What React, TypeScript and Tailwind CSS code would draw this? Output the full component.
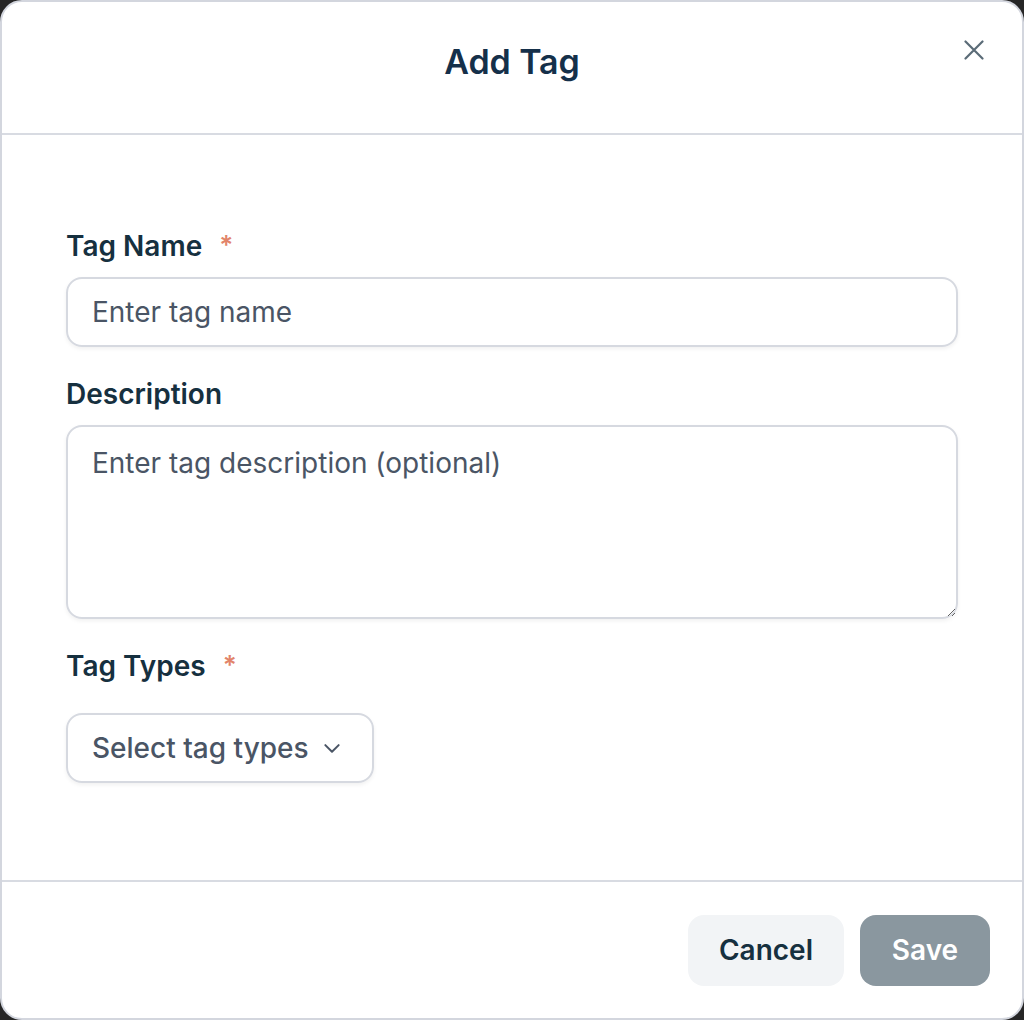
import React from "react";

export default function App() {
  return (
    <div
      className="w-[1024px] h-[1020px] bg-[#262626] overflow-hidden"
      style={{ fontFamily: "Inter, 'Noto Sans', sans-serif" }}
    >
      <div className="w-[1024px] h-[1020px] bg-white border-2 border-[#d3d6de] rounded-[22px] flex flex-col overflow-hidden">
        {/* Header */}
        <div className="relative h-[133px] shrink-0 flex items-center justify-center border-b-2 border-[#d8dbe2]">
          <h1 className="text-[34px] font-semibold text-[#15304a] tracking-[-0.1px] -mt-[12px]">Add Tag</h1>
          <button className="absolute right-[38px] top-[38px] w-[20px] h-[20px] flex items-center justify-center text-[#5a6b77]">
            <svg width="20" height="20" viewBox="0 0 20 20" fill="none" stroke="currentColor" strokeWidth="2.2" strokeLinecap="round">
              <path d="M1.5 1.5L18.5 18.5M18.5 1.5L1.5 18.5" />
            </svg>
          </button>
        </div>

        {/* Body */}
        <div className="flex-1 px-[64px] pt-[93px] flex flex-col">
          <div className="flex items-center h-[36px]">
            <label className="text-[28px] font-semibold text-[#16303f]">Tag Name</label>
            <span className="ml-[17px] text-[26px] font-semibold text-[#e2846a] -mt-[4px]">*</span>
          </div>
          <input
            className="mt-[13px] h-[70px] w-full rounded-[16px] border-2 border-[#d6d9e0] px-[24px] text-[28px] text-[#4a5565] placeholder:text-[#4a5565] shadow-[0_2px_4px_rgba(0,0,0,0.06)] outline-none"
            placeholder="Enter tag name"
          />

          <div className="flex items-center h-[36px] mt-[29px]">
            <label className="text-[28px] font-semibold text-[#16303f]">Description</label>
          </div>
          <textarea
            className="mt-[13px] h-[194px] w-full rounded-[16px] border-2 border-[#d6d9e0] px-[24px] py-[15px] text-[28px] text-[#4a5565] placeholder:text-[#4a5565] shadow-[0_2px_4px_rgba(0,0,0,0.06)] outline-none"
            placeholder="Enter tag description (optional)"
          />

          <div className="flex items-center h-[36px] mt-[29px]">
            <label className="text-[28px] font-semibold text-[#16303f]">Tag Types</label>
            <span className="ml-[17px] text-[26px] font-semibold text-[#e2846a] -mt-[4px]">*</span>
          </div>
          <div className="mt-[29px]">
            <button className="h-[70px] w-[308px] rounded-[16px] border-2 border-[#d6d9e0] pl-[24px] pr-[30px] flex items-center justify-between text-[28px] font-medium text-[#4a5565] shadow-[0_2px_4px_rgba(0,0,0,0.06)]">
              <span>Select tag types</span>
              <svg width="20" height="20" viewBox="0 0 24 24" fill="none" stroke="currentColor" strokeWidth="2.4" strokeLinecap="round" strokeLinejoin="round">
                <path d="M4 8.5l8 8 8-8" />
              </svg>
            </button>
          </div>
        </div>

        {/* Footer */}
        <div className="h-[138px] shrink-0 border-t-2 border-[#d8dbe2] flex items-center justify-end gap-[16px] pr-[32px]">
          <button className="h-[71px] w-[156px] rounded-[16px] bg-[#f2f4f6] text-[28px] font-semibold text-[#16303f]">
            Cancel
          </button>
          <button className="h-[71px] w-[130px] rounded-[16px] bg-[#8a979f] text-[28px] font-semibold text-white">
            Save
          </button>
        </div>
      </div>
    </div>
  );
}
